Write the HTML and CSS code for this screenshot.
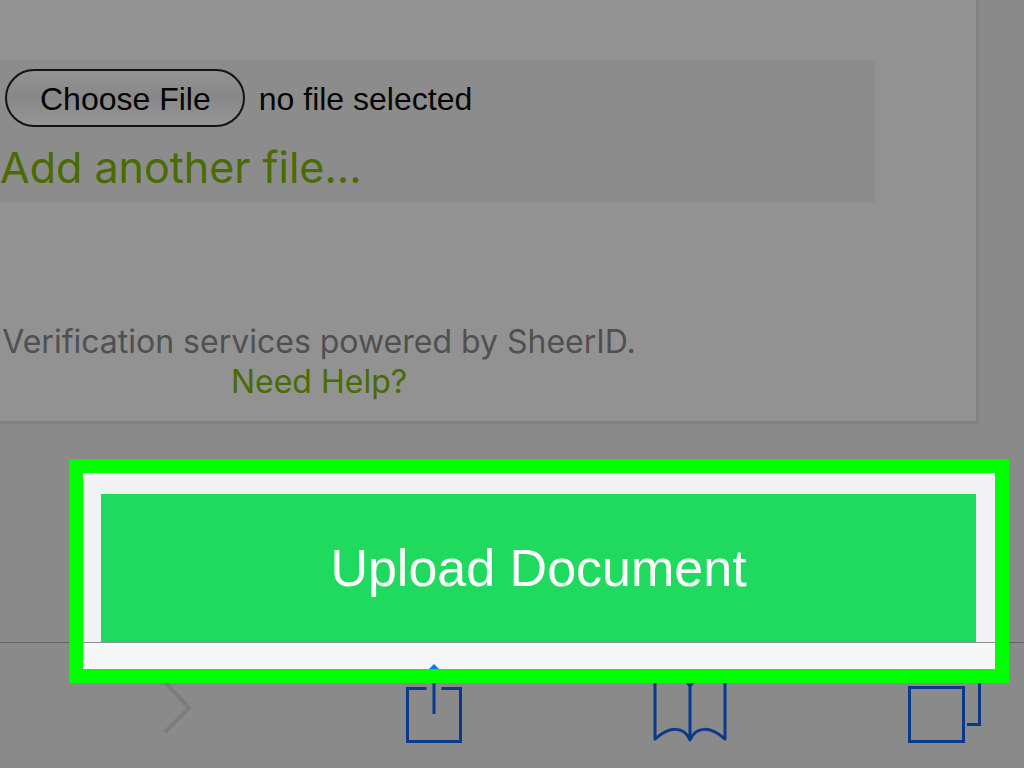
FILE: index.html
```html
<!DOCTYPE html>
<html lang="en">
<head>
    <meta charset="UTF-8">
    <meta name="viewport" content="width=device-width, initial-scale=1.0">
    <title>Upload Document</title>
    <link rel="stylesheet" href="styles.css">
</head>
<body>
    <main class="card">
        <div class="file-panel">
            <div class="file-row">
                <input type="file" id="document-file" class="file-input">
                <label for="document-file" class="file-button">Choose File</label>
                <span class="file-name">no file selected</span>
            </div>
            <a href="#" class="add-file">Add another file...</a>
        </div>
        <div class="powered-by">
            <p>Verification services powered by SheerID.</p>
            <a href="#" class="help-link">Need Help?</a>
        </div>
    </main>

    <div class="upload-area">
        <button type="button" class="upload-button">Upload Document</button>
    </div>

    <!-- Browser toolbar -->
    <nav class="toolbar">
        <a href="#" aria-label="Forward">
            <svg width="30" height="63" viewBox="0 0 30 63">
                <path d="M1 2 L25 28 L1 52" fill="none" stroke="#7c7c7c" stroke-width="4"/>
            </svg>
        </a>
        <a href="#" aria-label="Share">
            <svg width="56" height="79" viewBox="0 0 56 79">
                <path d="M20.500 24.500 H1.500 V77.500 H54.500 V24.500 H35.500 M28 4 V50" fill="none" stroke="#0b3a8c" stroke-width="3"/>
                <path d="M28 0 L39 11 H17 Z" fill="#1673ea"/>
            </svg>
        </a>
        <a href="#" aria-label="Bookmarks">
            <svg width="74" height="64" viewBox="0 0 74 64">
                <path d="M37 61 C31 47 17 47 2 60 V2 Q22 -8 37 3 Q52 -8 72 2 V60 C57 47 43 47 37 61 V3" fill="none" stroke="#0b3a8c" stroke-width="3" stroke-linejoin="round"/>
                <path d="M33 4 H41 L37 10 Z" fill="#0b3a8c"/>
            </svg>
        </a>
        <a href="#" aria-label="Tabs">
            <svg width="74" height="74" viewBox="0 0 74 74">
                <path d="M1.500 18.500 H55.500 V72.500 H1.500 Z M59 55.500 H71.500 V1.500 H18 V10" fill="none" stroke="#0b3a8c" stroke-width="3"/>
            </svg>
        </a>
    </nav>
</body>
</html>
```

FILE: styles.css
```css
* {
    box-sizing: border-box;
}
body {
    margin: 0;
    min-height: 100vh;
    display: flex;
    flex-direction: column;
    background-color: #8a8a8a;
    font-family: "Liberation Sans", Arial, sans-serif;
}
a {
    text-decoration: none;
}

/* White card with the file picker */
.card {
    margin-right: 45px;
    padding: 60px 101px 19px 0;
    background-color: #929292;
    border: 3px solid #808080;
    border-width: 0 3px 3px 0;
}
.file-panel {
    padding: 9px 0 7px;
    background-color: #8c8c8c;
}
.file-row {
    display: flex;
    align-items: center;
    gap: 14px;
    padding-left: 5px;
    font-size: 32px;
    color: #050505;
}
.file-input {
    position: absolute;
    width: 1px;
    height: 1px;
    opacity: 0;
}
.file-button {
    padding: 2px 32px 0 33px;
    line-height: 52px;
    border: 2px solid #141414;
    border-radius: 29px;
    background-image: linear-gradient(#929292, #888888 50%, #969696);
    cursor: pointer;
}
.file-name {
    padding-top: 2px;
}
.add-file {
    display: block;
    margin-top: 12px;
    font-family: Inter, sans-serif;
    font-size: 43px;
    line-height: 57px;
    color: #4a6b00;
}
.powered-by {
    width: 638px;
    margin-top: 119px;
    font-family: Inter, sans-serif;
    font-size: 32px;
    line-height: 40px;
    text-align: center;
    white-space: nowrap;
    color: #505052;
}
.powered-by p {
    margin: 0;
}
.help-link {
    color: #4a6b00;
}

/* Highlighted upload button, the frame is drawn over the toolbar */
.upload-area {
    position: relative;
    margin: 49px 29px 0 83px;
    padding: 21px 19px 27px 18px;
    background: linear-gradient(#f2f1f5, #f2f1f5) no-repeat 0 0 / 100% 169px, #f6f7f7;
}
.upload-area::after {
    content: "";
    position: absolute;
    inset: -14px;
    z-index: 2;
    border: 14px solid #00ff00;
    pointer-events: none;
}
.upload-button {
    display: block;
    width: 100%;
    padding: 0;
    border: none;
    background-color: #20da60;
    color: #ffffff;
    font-family: inherit;
    font-size: 52px;
    line-height: 148px;
    cursor: pointer;
}

.toolbar {
    position: relative;
    z-index: 1;
    flex: 1;
    display: flex;
    justify-content: space-between;
    align-items: flex-end;
    margin-top: -27px;
    padding: 21px 42px 25px 142px;
    border-top: 1px solid rgba(70, 70, 70, 0.6);
}
.toolbar a {
    display: flex;
    justify-content: center;
    width: 74px;
}
```
